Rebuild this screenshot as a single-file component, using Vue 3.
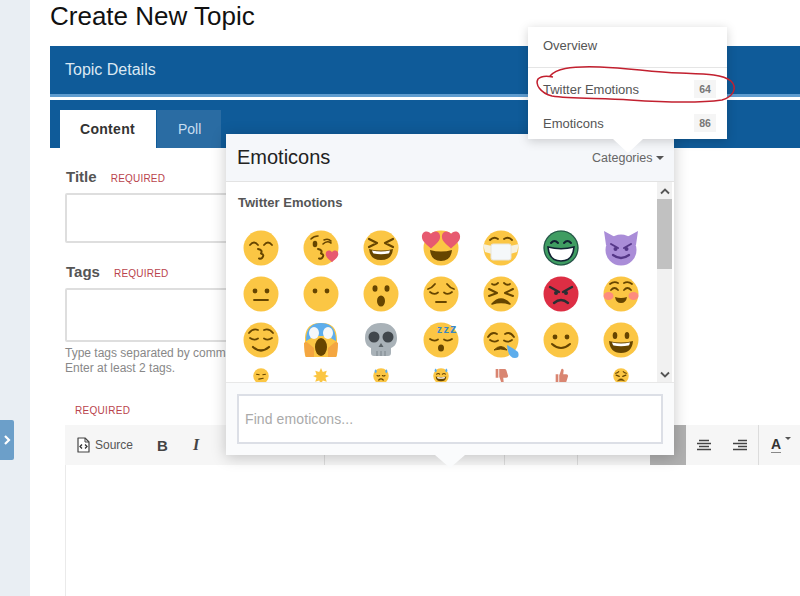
<script setup>
const Y = '#fbc644'
const D = '#664500'
const face = (c = Y) => `<circle cx="18" cy="18" r="17.5" fill="${c}"/>`
const eyes = `<circle cx="12" cy="15" r="2.4" fill="${D}"/><circle cx="24" cy="15" r="2.4" fill="${D}"/>`
const tall = `<ellipse cx="12" cy="13.5" rx="2.3" ry="3.6" fill="${D}"/><ellipse cx="24" cy="13.5" rx="2.3" ry="3.6" fill="${D}"/>`
const s = (d, w = 1.8, c = D) => `<path d="${d}" fill="none" stroke="${c}" stroke-width="${w}" stroke-linecap="round" stroke-linejoin="round"/>`
const happyEyes = s('M7 15q4-5 8 0M21 15q4-5 8 0')
const sadLids = s('M7 16q4 3.5 8 .5M21 16.5q4 3 8-.5')
const kissMouth = s('M15 19q5 1 3 4.5q4 1 1 4.5q-1 1-3 .5', 2)
const heart = (x, y, k, c = '#e75a70') =>
  `<path transform="translate(${x} ${y}) scale(${k})" d="M0-3C-1.5-6-7-6-7-1C-7 3-2 6 0 8C2 6 7 3 7-1C7-6 1.5-6 0-3Z" fill="${c}"/>`
const bigSmile = (c = D) => `<path d="M6 19q12 3 24 0q-1 11-12 11T6 19Z" fill="${c}"/>`
const teeth = `<path d="M9 20.5q9 2 18 0q-.5 2.5-1.5 3q-7.500 1.5-15 0q-1-1-1.5-3Z" fill="#fff"/>`
const ztext = (x, y, size) =>
  `<text x="${x}" y="${y}" font-family="Liberation Sans, sans-serif" font-weight="700" font-size="${size}" fill="#3b88c3">z</text>`

const emojis = [
  face() + happyEyes + kissMouth,
  face() + s('M8 9q3-3 7-3', 1.6) + `<ellipse cx="12" cy="14" rx="2.3" ry="3.3" fill="${D}"/>` + s('M20 14q4-4 8-1M21 10q4-2 7 1', 1.6) + kissMouth + heart(29, 25, 0.9),
  face() + s('M6 9l8 4-8 4M30 9l-8 4 8 4', 2.2) + bigSmile() + teeth,
  face() + `<path d="M7 20q11 3 22 0q-1 11-11 11T7 20Z" fill="${D}"/>` + heart(8, 8, 1.3) + heart(28, 8, 1.3),
  face() + s('M7 10q4-4 8-1M21 9q4-3 8 1') + `<path d="M0 14l9 2v8l-7-2ZM36 14l-9 2v8l7-2Z" fill="#f7f1dd"/><rect x="8" y="14" width="20" height="16" rx="2" fill="#f5f8fa" stroke="#e8e4d8"/>`,
  face('#3f9d62') + s('M8 13q3.5-4 7 0M21 13q3.5-4 7 0', 2, '#123') + `<path d="M5 17q13 3.5 26 0q-1 14-13 14T5 17Z" fill="#fff" stroke="#123" stroke-width="1.6"/><circle cx="18" cy="18" r="17" fill="none" stroke="#123" stroke-opacity=".6" stroke-width="1.2"/>`,
  `<path d="M1 1l11 6h12l11-6-2 14H3Z" fill="#aa8dd8"/>` + `<circle cx="18" cy="20" r="15.5" fill="#aa8dd8"/>` + s('M8 14l7 4M28 14l-7 4', 2, '#553788') + `<circle cx="12.5" cy="19" r="2" fill="#553788"/><circle cx="23.5" cy="19" r="2" fill="#553788"/>` + s('M10 25q8 6 16 0', 2.2, '#553788'),
  face() + eyes + s('M11 24h14', 1.8),
  face() + eyes,
  face() + `<ellipse cx="12" cy="12.5" rx="2.5" ry="3.3" fill="${D}"/><ellipse cx="24" cy="12.5" rx="2.5" ry="3.3" fill="${D}"/><ellipse cx="18" cy="25" rx="4" ry="5.5" fill="${D}"/>`,
  face() + s('M5 13q4-1 7-5M31 13q-4-1-7-5') + sadLids + s('M13 26h10'),
  face() + s('M9 8q3 2 6-1M21 7q3 3 6 1') + s('M6 13l8 4-8 3M30 13l-8 4 8 3', 2) + `<path d="M9 28q9-10 18 0q-9-3-18 0Z" fill="${D}" stroke="${D}" stroke-width="1.5" stroke-linejoin="round"/>`,
  face('#dd2e44') + s('M7 11l9 5M29 11l-9 5', 2.4, '#292f33') + `<circle cx="13" cy="17" r="2" fill="#292f33"/><circle cx="23" cy="17" r="2" fill="#292f33"/>` + s('M11 27q7-6 14 0', 2.4, '#292f33'),
  face() + s('M7 8q4-3 8-1M21 7q4-2 8 1') + s('M8 14q3.5-4 7 0M21 14q3.5-4 7 0') + `<ellipse cx="5.5" cy="20" rx="5" ry="4" fill="#ff7892" fill-opacity=".75"/><ellipse cx="30.5" cy="20" rx="5" ry="4" fill="#ff7892" fill-opacity=".75"/><path d="M12 21q6 2 12 0q-1 6-6 6t-6-6Z" fill="${D}"/>`,
  face() + s('M6 11q4-5 9-3M21 8q5-2 9 3') + s('M7 16q4 3 8 .5M21 16.5q4 2.5 8-.5') + s('M10 25q8 7 16 0', 2.2),
  `<path d="M2 18C2 4 9 1 18 1s16 3 16 17c0 7 1 17-1 17H3c-2 0-1-10-1-17Z" fill="${Y}"/><path d="M3 19C3 6 9 1 18 1s15 5 15 18L24 14H12Z" fill="#5dadec"/><ellipse cx="11" cy="11" rx="5" ry="6" fill="#f5f8fa"/><ellipse cx="25" cy="11" rx="5" ry="6" fill="#f5f8fa"/><ellipse cx="18" cy="25" rx="6" ry="9" fill="${D}"/><path d="M1 21q2-2 4 0l6 5v9H3q-2-5-2-14ZM35 21q-2-2-4 0l-6 5v9h8q2-5 2-14Z" fill="#f4a641"/>`,
  `<path d="M18 1C8 1 2 7 2 16c0 6 3 9 6 10v5q0 3 3 3h14q3 0 3-3v-5c3-1 6-4 6-10 0-9-6-15-16-15Z" fill="#a9b2b8"/><circle cx="11" cy="15" r="5.5" fill="#41474c"/><circle cx="25" cy="15" r="5.5" fill="#41474c"/><path d="M18 21l-2.500 4h5Z" fill="#5b6368"/><path d="M14 29v5M18 29v5M22 29v5" stroke="#7d868c" stroke-width="1"/>`,
  face() + s('M7 17q4 3 8 .5M21 17.5q4 2.5 8-.5') + `<ellipse cx="18" cy="26" rx="3" ry="3.5" fill="${D}"/>` + ztext(14, 11, 10) + ztext(20.5, 11, 11) + ztext(27, 11, 13),
  face() + s('M5 15q4-6 9-3M22 12q5-3 9 3') + s('M7 18q4 3 8 .5M21 18.5q4 2.5 8-.5') + `<path d="M11 28q7-7 13 0q-6-2-13 0Z" fill="${D}" stroke="${D}" stroke-linejoin="round"/><path d="M24 23q6 3 11 7q2 6-3 6q-7 0-8-13Z" fill="#5dadec"/>`,
  face() + eyes + s('M9 22q9 8 18 0', 2),
  face() + tall + `<path d="M6 19q12 3 24 0q-1 12-12 12T6 19Z" fill="${D}"/>` + teeth,
]
const smallRow = [
  face() + s('M8 14l6 1M22 15l6-1', 2.4) + s('M13 25l10-2', 2.4),
  `<path d="M18 0l4 9 9-3-3 9 8 3-8 4 3 9-9-3-4 9-4-9-9 3 3-9-8-4 8-3-3-9 9 3Z" fill="${Y}"/>`,
  face() + `<path d="M6 3q5 5 0 9q-5-4 0-9ZM30 3q5 5 0 9q-5-4 0-9Z" fill="#5dadec"/>` + s('M9 17q3 2 6 0M21 17q3 2 6 0', 2.4) + s('M13 27q5-5 10 0', 2.8),
  face() + `<path d="M6 1q5 5 0 9q-5-4 0-9ZM30 1q5 5 0 9q-5-4 0-9Z" fill="#5dadec"/>` + s('M8 14q4-3 7 0M21 14q4-3 7 0', 2.4) + bigSmile() + teeth,
  `<path d="M6 2h6v20H6ZM14 2h12q3 0 4 3l4 13q0 4-4 4h-7l1 9q-1 5-5 3l-4-12-1-2Z" fill="#d98571"/>`,
  `<path d="M6 14h6v20H6ZM14 34h12q3 0 4-3l4-13q0-4-4-4h-7l1-9q-1-5-5-3l-4 12-1 2Z" fill="#d98571"/>`,
  face() + s('M6 12q4-1 7-4M30 12q-4-1-7-4', 2.4) + s('M7 16l7 3M29 16l-7 3', 2.8) + `<path d="M10 29q8-10 16 0q-8-3-16 0Z" fill="${D}" stroke="${D}"/>`,
]
</script>

<template>
  <div class="page">
    <aside class="rail"></aside>
    <main class="main">
      <h1 class="heading">Create New Topic</h1>
      <div class="details">Topic Details</div>
      <nav class="tabs">
        <span class="tab active">Content</span>
        <span class="tab">Poll</span>
      </nav>
      <form class="form">
        <div class="label first">Title <em>REQUIRED</em></div>
        <div class="field title"></div>
        <div class="label tags">Tags <em>REQUIRED</em></div>
        <div class="field tagfield"></div>
        <p class="help">Type tags separated by commas.<br />Enter at least 2 tags.</p>
        <div class="req">REQUIRED</div>
        <div class="toolbar">
          <div class="group g1">
            <span class="source">
              <svg width="13" height="16" viewBox="0 0 13 16">
                <path d="M1 1h7l4 4v10H1Z" fill="#fff" stroke="#444" stroke-width="1.2" stroke-linejoin="round" />
                <path d="M8 1v4h4" fill="none" stroke="#444" />
                <path d="M5 7.5l-2 2 2 2M8 7.5l2 2-2 2" fill="none" stroke="#333" stroke-width="1.3" />
              </svg>
              Source
            </span>
            <b class="btn-b">B</b>
            <i class="btn-i">I</i>
          </div>
          <div class="group g2"></div>
          <div class="group g3"></div>
          <div class="group g4">
            <span class="pressed"></span>
            <span class="align">
              <svg width="14" height="12" viewBox="0 0 14 12"><path d="M2 1.5h10M0 4.5h14M2 7.5h10M0 10.5h14" stroke="#444" stroke-width="1.6" /></svg>
            </span>
            <span class="align">
              <svg width="14" height="12" viewBox="0 0 14 12"><path d="M5 1.5h9M0 4.5h14M5 7.5h9M0 10.5h14" stroke="#444" stroke-width="1.6" /></svg>
            </span>
          </div>
          <div class="group g5">
            <span class="color-a">A</span>
            <span class="caret small"></span>
          </div>
        </div>
        <div class="editor"></div>
      </form>
    </main>

    <button class="rail-toggle" type="button" aria-label="Expand">
      <svg width="8" height="12" viewBox="0 0 8 12"><path d="M2 2l4 4-4 4" fill="none" stroke="#fff" stroke-width="2.2" /></svg>
    </button>

    <section class="picker">
      <header class="picker-head">
        <span class="picker-title">Emoticons</span>
        <span class="cats">Categories <span class="caret"></span></span>
      </header>
      <div class="picker-body">
        <h2 class="section">Twitter Emotions</h2>
        <div class="grid">
          <span v-for="(e, i) in emojis" :key="i" class="cell">
            <svg class="emoji" viewBox="0 0 36 36" v-html="e"></svg>
          </span>
          <span v-for="(e, i) in smallRow" :key="'s' + i" class="cell low">
            <svg class="emoji mini" viewBox="0 0 36 36" v-html="e"></svg>
          </span>
        </div>
        <div class="scroll">
          <svg class="chev" width="10" height="7" viewBox="0 0 10 7"><path d="M1 5.5l4-4 4 4" fill="none" stroke="#555" stroke-width="1.8" /></svg>
          <div class="thumb"></div>
          <svg class="chev down" width="10" height="7" viewBox="0 0 10 7"><path d="M1 1.5l4 4 4-4" fill="none" stroke="#555" stroke-width="1.8" /></svg>
        </div>
      </div>
      <footer class="picker-foot">
        <div class="find">Find emoticons...</div>
      </footer>
      <span class="picker-arrow"></span>
    </section>

    <section class="menu">
      <div class="item first-item">Overview</div>
      <div class="item">Twitter Emotions <span class="badge">64</span></div>
      <div class="item">Emoticons <span class="badge">86</span></div>
      <span class="menu-arrow"></span>
    </section>

    <svg class="scribble" width="800" height="596" viewBox="0 0 800 596">
      <path d="M550 76C556 69 568 66 600 67C630 68 650 72 680 73C705 74 722 74 731 81C738 88 733 97 722 100C700 103 660 102 630 100C600 98 570 99 552 96C540 93 535 84 538 79C541 76 548 76 553 77" fill="none" stroke="#c2202f" stroke-width="1.5" />
    </svg>
  </div>
</template>

<style scoped>
.page {
  position: relative;
  display: flex;
  width: 800px;
  height: 596px;
  overflow: hidden;
  background: #fff;
  font-family: "Liberation Sans", Arial, sans-serif;
  color: #444;
}
.rail {
  flex: 0 0 30px;
  background: #e9eef3;
}
.main {
  flex: 1;
  min-width: 0;
  padding-left: 20px;
}
.heading {
  margin: 0;
  height: 46px;
  padding-top: 2px;
  box-sizing: border-box;
  font-size: 26px;
  line-height: 28px;
  font-weight: 400;
  color: #111;
}
.details {
  height: 48px;
  padding-left: 15px;
  line-height: 48px;
  font-size: 16px;
  color: #dbe8f3;
  background: #0f5b99;
  border-bottom: 3px solid #5f9ccf;
  box-sizing: content-box;
}
.tabs {
  display: flex;
  align-items: flex-end;
  gap: 1px;
  height: 48px;
  margin-top: 3px;
  padding-left: 10px;
  background: #0f5b99;
}
.tab {
  height: 38px;
  padding: 0 20px 0 21px;
  line-height: 38px;
  font-size: 14px;
  color: #c9def0;
  background: #2a6ca3;
}
.tab.active {
  width: 56px;
  padding: 0 20px;
  font-weight: 700;
  letter-spacing: 0.3px;
  color: #333;
  background: #fff;
}
.form {
  padding-left: 15px;
}
.label {
  height: 20px;
  padding-left: 1px;
  line-height: 20px;
  font-size: 15px;
  font-weight: 700;
  color: #555;
}
.label em {
  margin-left: 10px;
  font-size: 10px;
  font-style: normal;
  font-weight: 400;
  letter-spacing: 0.2px;
  color: #b9434c;
}
.label.first {
  margin-top: 19px;
}
.label.tags {
  margin-top: 19px;
}
.field {
  width: 500px;
  margin-top: 7px;
  box-sizing: border-box;
  border: 2px solid #dedede;
  border-radius: 2px;
}
.field.title {
  height: 50px;
  margin-top: 6px;
}
.field.tagfield {
  height: 54px;
  margin-top: 6px;
}
.help {
  margin: 4px 0 0;
  font-size: 12px;
  line-height: 14.5px;
  color: #888;
}
.req {
  margin-top: 29px;
  padding-left: 10px;
  height: 14px;
  line-height: 14px;
  font-size: 10px;
  letter-spacing: 0.3px;
  color: #b9434c;
}
.toolbar {
  display: flex;
  height: 40px;
  margin-top: 7px;
  background: #f6f6f6;
}
.group {
  display: flex;
  align-items: center;
  height: 100%;
  box-sizing: border-box;
  border-right: 1px solid #dcdcdc;
}
.g1 { flex: 0 0 260px; }
.g2 { flex: 0 0 180px; }
.g3 { flex: 0 0 73px; }
.g4 { flex: 0 0 181px; padding-left: 72px; }
.g5 { flex: 1; padding-left: 12px; gap: 4px; border-right: 0; }
.source {
  display: flex;
  align-items: center;
  gap: 5px;
  margin-left: 12px;
  font-size: 12px;
  color: #555;
}
.btn-b {
  margin-left: 24px;
  font-size: 15px;
  color: #444;
}
.btn-i {
  margin-left: 25px;
  font-family: "Liberation Serif", serif;
  font-size: 16px;
  font-weight: 700;
  color: #444;
}
.pressed {
  flex: 0 0 36px;
  height: 100%;
  background: #b0b0b0;
}
.align {
  display: flex;
  justify-content: center;
  flex: 0 0 36px;
}
.color-a {
  font-size: 14px;
  font-weight: 700;
  line-height: 15px;
  color: #333;
  border-bottom: 1px solid #888;
}
.caret {
  display: inline-block;
  width: 0;
  height: 0;
  vertical-align: middle;
  border-left: 4px solid transparent;
  border-right: 4px solid transparent;
  border-top: 4px solid #555;
}
.caret.small {
  margin-top: -14px;
  border-left-width: 3px;
  border-right-width: 3px;
  border-top-width: 3px;
}
.editor {
  height: 140px;
  border-left: 1px solid #eaeaea;
}
.rail-toggle {
  position: absolute;
  left: 0;
  top: 420px;
  display: flex;
  align-items: center;
  justify-content: center;
  width: 14px;
  height: 40px;
  padding: 0;
  border: 0;
  border-radius: 0 2px 2px 0;
  background: #6c9fc9;
}
.picker {
  position: absolute;
  left: 226px;
  top: 134px;
  display: flex;
  flex-direction: column;
  width: 448px;
  height: 321px;
  background: #f8f9fb;
  box-shadow: 0 2px 14px rgba(0, 0, 0, 0.22);
}
.picker-head {
  display: flex;
  flex: 0 0 48px;
  align-items: center;
  justify-content: space-between;
  padding: 0 10px 0 11px;
  box-sizing: border-box;
  border-bottom: 1px solid #e3e3e3;
  background: #f5f7fa;
}
.picker-title {
  font-size: 20px;
  color: #222;
}
.cats {
  font-size: 12.5px;
  color: #666;
}
.picker-body {
  position: relative;
  flex: 0 0 200px;
  overflow: hidden;
  background: #fff;
}
.section {
  margin: 0;
  padding: 13px 0 0 12px;
  height: 43px;
  box-sizing: border-box;
  font-size: 13px;
  line-height: 16px;
  font-weight: 700;
  color: #555;
}
.grid {
  display: grid;
  grid-template-columns: repeat(7, 60px);
  grid-auto-rows: 46px;
  padding-left: 5px;
}
.cell {
  display: flex;
  align-items: center;
  justify-content: center;
}
.cell.low {
  align-items: flex-start;
  padding-top: 5px;
}
.emoji {
  width: 36px;
  height: 36px;
  overflow: visible;
}
.emoji.mini {
  width: 16px;
  height: 16px;
}
.scroll {
  position: absolute;
  top: 0;
  right: 2px;
  bottom: 0;
  display: flex;
  flex-direction: column;
  align-items: center;
  width: 15px;
  background: #f1f1f1;
}
.chev {
  position: absolute;
  top: 6px;
}
.chev.down {
  top: auto;
  bottom: 4px;
}
.thumb {
  width: 15px;
  height: 70px;
  margin-top: 17px;
  background: #c1c1c1;
}
.picker-foot {
  flex: 1;
  padding: 11px 11px;
  background: #fafbfc;
  border-top: 1px solid #e8e8e8;
}
.find {
  height: 50px;
  padding-left: 6px;
  box-sizing: border-box;
  border: 2px solid #dcdfe6;
  line-height: 46px;
  font-size: 14px;
  letter-spacing: 0.1px;
  color: #aaa;
  background: #fff;
}
.picker-arrow {
  position: absolute;
  left: 209px;
  top: 100%;
  border-left: 15px solid transparent;
  border-right: 15px solid transparent;
  border-top: 13px solid #fafbfc;
}
.menu {
  position: absolute;
  left: 528px;
  top: 27px;
  width: 199px;
  height: 112px;
  background: #fff;
  box-shadow: 0 2px 10px rgba(0, 0, 0, 0.18);
}
.item {
  display: flex;
  align-items: center;
  justify-content: space-between;
  height: 34px;
  padding: 0 11px 0 15px;
  font-size: 13px;
  color: #555;
}
.first-item {
  height: 36px;
  padding-bottom: 4px;
  margin-bottom: 4px;
  border-bottom: 1px solid #e5e5e5;
}
.badge {
  width: 22px;
  height: 18px;
  line-height: 18px;
  text-align: center;
  font-size: 10.5px;
  font-weight: 700;
  color: #777;
  background: #f5f5f5;
}
.menu-arrow {
  position: absolute;
  left: 85px;
  top: 100%;
  border-left: 15px solid transparent;
  border-right: 15px solid transparent;
  border-top: 14px solid #fff;
}
.scribble {
  position: absolute;
  left: 0;
  top: 0;
  pointer-events: none;
}
</style>
